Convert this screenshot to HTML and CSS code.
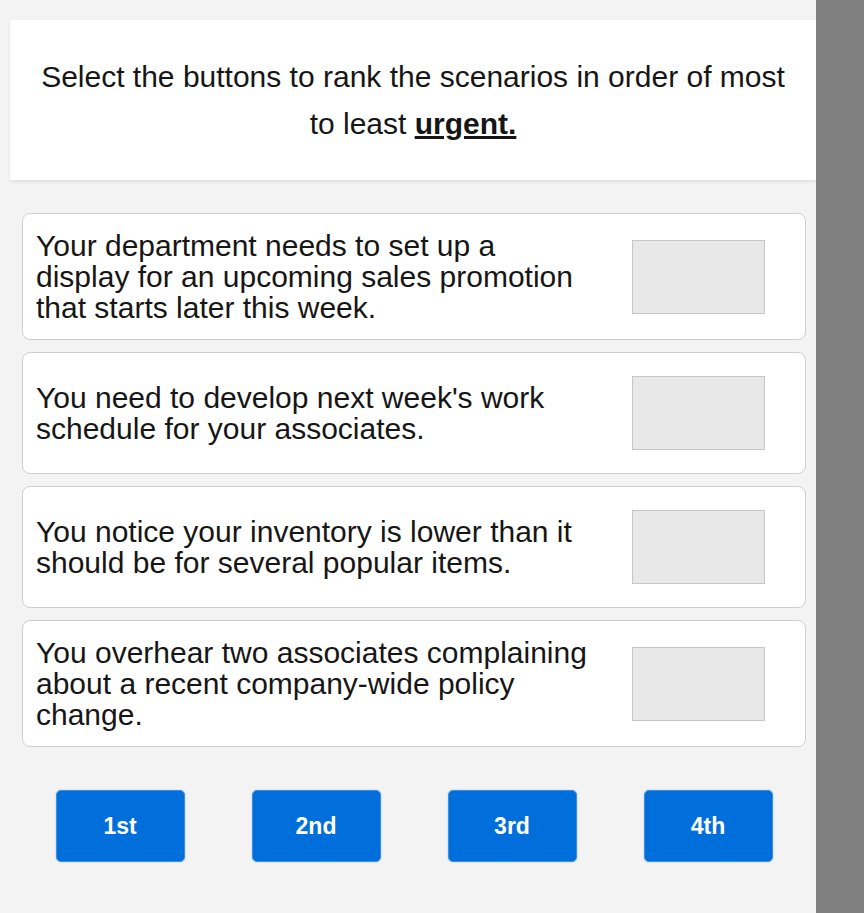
FILE: index.html
```html
<!DOCTYPE html>
<html lang="en">
  <head>
    <meta charset="UTF-8" />
    <meta name="viewport" content="width=device-width, initial-scale=1.0" />
    <title>Rank the scenarios</title>
    <link rel="stylesheet" href="styles.css">
  </head>
  <body>
    <div class="page">
      <div class="prompt">
        <p>Select the buttons to rank the scenarios in order of most to least <strong class="key">urgent.</strong></p>
      </div>

      <ul class="scenarios">
        <li class="scenario">
          <span class="scenario-text">Your department needs to set up a display for an upcoming sales promotion that starts later this week.</span>
          <span class="slot"></span>
        </li>
        <li class="scenario">
          <span class="scenario-text">You need to develop next week's work schedule for your associates.</span>
          <span class="slot"></span>
        </li>
        <li class="scenario">
          <span class="scenario-text">You notice your inventory is lower than it should be for several popular items.</span>
          <span class="slot"></span>
        </li>
        <li class="scenario">
          <span class="scenario-text">You overhear two associates complaining about a recent company-wide policy change.</span>
          <span class="slot"></span>
        </li>
      </ul>

      <div class="ranks">
        <button class="rank">1st</button>
        <button class="rank">2nd</button>
        <button class="rank">3rd</button>
        <button class="rank">4th</button>
      </div>
    </div>
    <div class="scrollbar"></div>
  </body>
</html>
```

FILE: styles.css
```css
* {
  box-sizing: border-box;
}
body {
  margin: 0;
  height: 100vh;
  display: flex;
  background-color: #f3f3f3;
  font-family: "Liberation Sans", Arial, sans-serif;
  color: #161616;
  overflow: hidden;
}
.page {
  width: 816px;
  padding-top: 20px;
}
.prompt {
  margin-left: 10px;
  height: 160px;
  background-color: #fff;
  box-shadow: 0 2px 3px rgba(0, 0, 0, 0.08);
  display: flex;
  align-items: center;
  justify-content: center;
}
.prompt p {
  margin: 0;
  padding: 0 24px;
  font-size: 30px;
  line-height: 47px;
  text-align: center;
}
.key {
  text-decoration: underline;
}
.scenarios {
  list-style: none;
  margin: 33px 10px 0 22px;
  padding: 0;
  display: flex;
  flex-direction: column;
  gap: 12px;
}
.scenario {
  display: flex;
  align-items: center;
  background-color: #fff;
  border: 1px solid #cfcfcf;
  border-radius: 8px;
  padding: 16px 40px 16px 13px;
}
.scenario-text {
  width: 558px;
  font-size: 30px;
  line-height: 31px;
}
.slot {
  margin: 7px 0 7px auto;
  width: 133px;
  height: 74px;
  background-color: #e8e8e8;
  border: 1px solid #c6c6c6;
}
.ranks {
  margin: 43px 10px 0 22px;
  display: grid;
  grid-template-columns: repeat(4, 1fr);
  justify-items: center;
}
.rank {
  width: 129px;
  height: 72px;
  padding-top: 2px;
  border: 1px solid #3f8ee2;
  border-radius: 5px;
  background-color: #006fdc;
  color: #fff;
  font-family: "Liberation Sans", Arial, sans-serif;
  font-weight: bold;
  font-size: 23px;
  box-shadow: 0 0 2px rgba(0, 111, 220, 0.35);
  cursor: pointer;
}
.scrollbar {
  width: 48px;
  background-color: #808080;
}
```
